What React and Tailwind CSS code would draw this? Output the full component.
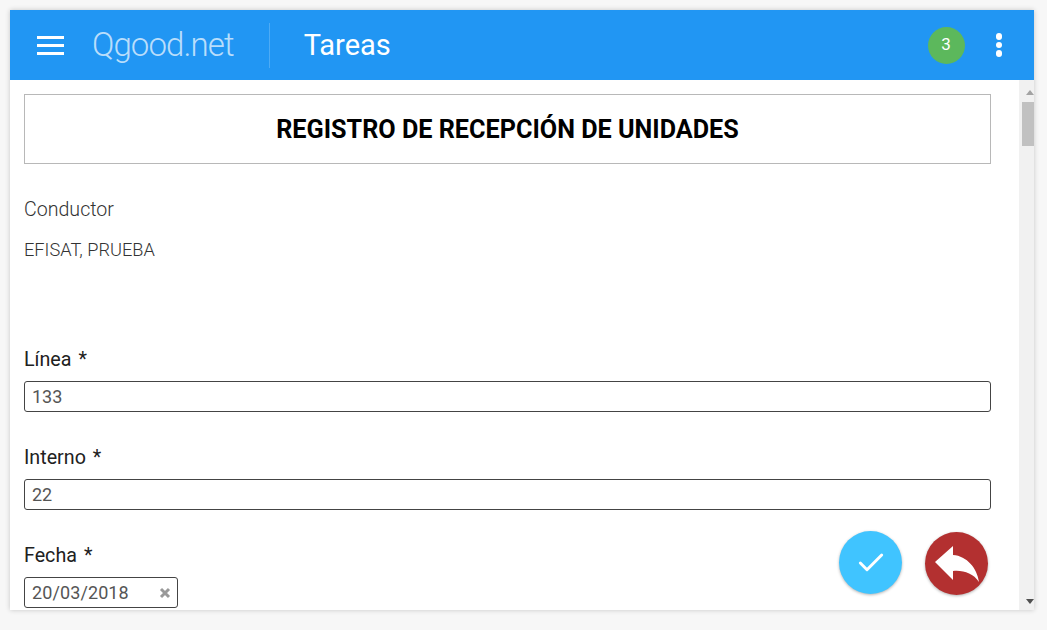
import { Check } from 'lucide-react';

const Label = ({ text }) => (
  <label className="block text-[19.7px] leading-[22px] text-[#212121] mb-[10px]">
    {text} <span className="ml-[2px]">*</span>
  </label>
);

const Field = ({ label, value }) => (
  <div className="mb-[35px]">
    <Label text={label} />
    <div className="h-[31px] w-[967px] border border-[#444] rounded-[3px] px-[7px] text-[18px] leading-[30px] text-[#555] bg-white">
      {value}
    </div>
  </div>
);

const App = () => {
  return (
    <div className="w-[1047px] h-[630px] bg-[#f7f7f7] p-[10px] pb-[20px] overflow-hidden font-['Roboto',sans-serif]">
      <div className="relative w-[1024px] h-[600px] bg-white flex flex-col shadow-[0_0_5px_rgba(0,0,0,0.2)] overflow-hidden">
        {/* barra superior */}
        <header className="h-[70px] shrink-0 bg-[#2196f3] flex items-center text-white">
          <div className="ml-[27px] w-[27px] flex flex-col gap-[5px]">
            <span className="h-[3px] bg-white" />
            <span className="h-[3px] bg-white" />
            <span className="h-[3px] bg-white" />
          </div>
          <span className="ml-[28px] text-[33px] font-light tracking-[-0.9px] text-white/70">Qgood.net</span>
          <div className="ml-[35px] h-[45px] w-px bg-white/20" />
          <span className="ml-[34px] text-[29px] pt-[2px]">Tareas</span>
          <div className="ml-auto w-[37px] h-[37px] rounded-full bg-[#5cb85c] flex items-center justify-center text-[17px]">3</div>
          <div className="ml-[31px] mr-[32px] flex flex-col gap-[2px]">
            <span className="w-[6.5px] h-[6.5px] rounded-full bg-white" />
            <span className="w-[6.5px] h-[6.5px] rounded-full bg-white" />
            <span className="w-[6.5px] h-[6.5px] rounded-full bg-white" />
          </div>
        </header>

        <div className="flex flex-1 min-h-0">
          {/* contenido */}
          <main className="flex-1 overflow-hidden pl-[14px] pt-[14px]">
            <div className="w-[967px] h-[70px] border-[1.5px] border-[#b8b8b8] flex items-center justify-center text-[25.2px] font-bold text-black pt-[1px] mb-[34px]">
              REGISTRO DE RECEPCIÓN DE UNIDADES
            </div>
            <p className="text-[19.6px] font-light leading-[24px] text-[#333] mb-[17px]">Conductor</p>
            <p className="text-[18.2px] font-light leading-[22px] text-[#333] mb-[88px]">EFISAT, PRUEBA</p>
            <Field label="Línea" value="133" />
            <Field label="Interno" value="22" />
            <Label text="Fecha" />
            <div className="h-[31px] w-[154px] border border-[#444] rounded-[3px] pl-[7px] pr-[6px] flex items-center justify-between text-[18px] tracking-[0.1px] text-[#555]">
              <span>20/03/2018</span>
              <svg width="12" height="12" viewBox="0 0 12 12" className="mt-[1px]">
                <path d="M2 2 L10 10 M10 2 L2 10" stroke="#999" strokeWidth="3" />
              </svg>
            </div>
          </main>

          {/* barra de scroll */}
          <div className="w-[15px] shrink-0 bg-[#f1f1f1] flex flex-col items-end justify-between">
            <div className="w-[12px]">
              <div className="h-[22px] flex items-center justify-end pt-[2px]">
                <div className="w-0 h-0 border-x-[4.5px] border-x-transparent border-b-[5px] border-b-[#a3a3a3]" />
              </div>
              <div className="h-[44px] w-full bg-[#c1c1c1]" />
            </div>
            <div className="w-[12px] h-[17px] flex items-center justify-end">
              <div className="w-0 h-0 border-x-[4.5px] border-x-transparent border-t-[5px] border-t-[#505050]" />
            </div>
          </div>
        </div>

        {/* botones flotantes */}
        <button className="absolute left-[829px] top-[521px] w-[63px] h-[63px] rounded-full bg-[#40c4ff] shadow-[0_1px_3px_rgba(0,0,0,0.3)] flex items-center justify-center text-white">
          <Check size={32} strokeWidth={2.2} />
        </button>
        <button className="absolute left-[915px] top-[522px] w-[63px] h-[63px] rounded-full bg-[#b33030] shadow-[0_1px_3px_rgba(0,0,0,0.3)] flex items-center justify-center">
          <svg width="44" height="36" viewBox="0 0 44 36">
            <path d="M18 0 L0 16 L18 34 L18 25 C28 24 38 27 44 36 C42 22 32 10 18 9 Z" fill="#fff" />
          </svg>
        </button>
      </div>
    </div>
  );
};

export default App;
